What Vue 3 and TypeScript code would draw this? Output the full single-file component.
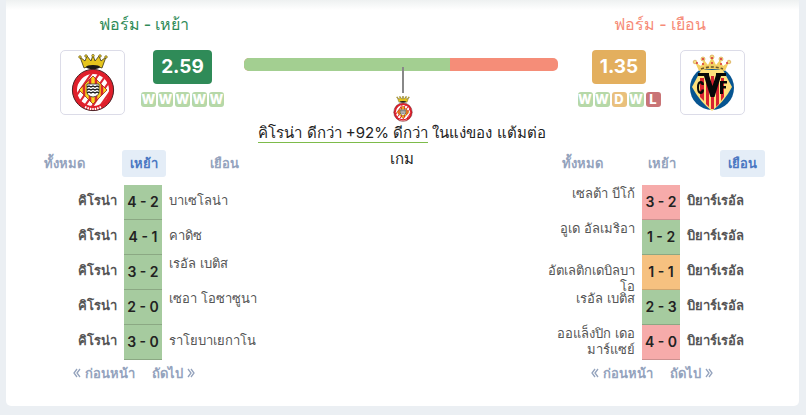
<script setup lang="ts">
type Result = 'W' | 'D' | 'L'
interface Match {
  home: string
  away: string
  score: string
  result: Result
  raised?: boolean
}
interface Side {
  key: 'home' | 'away'
  title: string
  rating: string
  form: Result[]
  active: number
  matches: Match[]
}

const tabs = ['ทั้งหมด', 'เหย้า', 'เยือน']
const girona = 'คิโรน่า'
const villarreal = 'บิยาร์เรอัล'

const homeSide: Side = {
  key: 'home',
  title: 'ฟอร์ม - เหย้า',
  rating: '2.59',
  form: ['W', 'W', 'W', 'W', 'W'],
  active: 1,
  matches: [
    { home: girona, away: 'บาเซโลน่า', score: '4 - 2', result: 'W' },
    { home: girona, away: 'คาดิซ', score: '4 - 1', result: 'W' },
    { home: girona, away: 'เรอัล เบติส', score: '3 - 2', result: 'W', raised: true },
    { home: girona, away: 'เซอา โอซาซูนา', score: '2 - 0', result: 'W', raised: true },
    { home: girona, away: 'ราโยบาเยกาโน', score: '3 - 0', result: 'W' },
  ],
}

const awaySide: Side = {
  key: 'away',
  title: 'ฟอร์ม - เยือน',
  rating: '1.35',
  form: ['W', 'W', 'D', 'W', 'L'],
  active: 2,
  matches: [
    { home: 'เซลต้า บีโก้', away: villarreal, score: '3 - 2', result: 'L', raised: true },
    { home: 'อูเด อัลเมริอา', away: villarreal, score: '1 - 2', result: 'W', raised: true },
    { home: 'อัตเลติกเดบิลบาโอ', away: villarreal, score: '1 - 1', result: 'D' },
    { home: 'เรอัล เบติส', away: villarreal, score: '2 - 3', result: 'W', raised: true },
    { home: 'ออแล็งปิก เดอ มาร์แซย์', away: villarreal, score: '4 - 0', result: 'L', raised: true },
  ],
}

const sides = [homeSide, awaySide]
const homeShare = 65.6
</script>

<template>
  <main class="card">
    <section v-for="side in sides" :key="side.key" class="side" :class="side.key">
      <h2 class="title">{{ side.title }}</h2>
      <div class="summary">
        <div class="logo">
          <svg v-if="side.key === 'home'" viewBox="0 0 44 58" width="44" height="58" role="img">
            <use href="#girona-crest" />
          </svg>
          <svg v-else viewBox="0 0 46 58" width="46" height="58" role="img">
            <circle cx="23" cy="34" r="22" fill="#075591" />
            <path d="M12 16h22l9 17Q35 48 23 57 11 48 3 33Z" fill="#ffe17c" />
            <path d="M11 24h4v23l-4-4zM17 22h3v31l-3-3zM22 22h3v33h-3zM27 22h3v28l-3 3zM32 24h3v19l-3 4z" fill="#d8232f" />
            <path d="M10 17 6 8l6 4 3-6 4 5 4-8 4 8 4-5 3 6 6-4-4 9Q23 13 10 17Z" fill="#f3cf63" />
            <g fill="#f6dc82" stroke="#cf9b3d" stroke-width=".6">
              <circle cx="6" cy="8" r="1.8" /><circle cx="14" cy="5" r="2" />
              <circle cx="23" cy="3" r="2" /><circle cx="32" cy="5" r="2" />
              <circle cx="40" cy="8" r="1.8" />
            </g>
            <g fill="#d9333b">
              <circle cx="14" cy="5" r="1.1" /><circle cx="23" cy="4" r="1.1" />
              <circle cx="32" cy="5" r="1.1" /><circle cx="14" cy="10" r="1" />
              <circle cx="23" cy="9" r="1" /><circle cx="32" cy="10" r="1" />
              <circle cx="8" cy="9" r="1" /><circle cx="38" cy="9" r="1" />
            </g>
            <path d="M12 15q11-4 22 0" fill="none" stroke="#6a5528" stroke-width="1.6" stroke-dasharray="3 2" />
            <path d="M9 19h11v2l3.500 11L27 21v-2h10v3h-5l-6.500 21h-4L15 22H9z" fill="#080808" />
            <path d="M15 31h-2.500q0-1.500-1-1.500-1.500 0-1.500 4t1.500 4q1 0 1-2H15q0 4.500-3.500 4.500T8 33.500t3.500-6.500q3.500 0 3.500 4z" fill="#080808" />
            <path d="M31 27h7v2.500h-4v2.500h3v2.500h-3V40h-3z" fill="#080808" />
          </svg>
        </div>
        <div class="form">
          <strong class="rating">{{ side.rating }}</strong>
          <div class="badges">
            <span v-for="(r, i) in side.form" :key="i" class="badge" :class="'form-' + r">{{ r }}</span>
          </div>
        </div>
      </div>

      <nav class="tabs">
        <div v-for="(tab, i) in tabs" :key="tab" class="tab-cell">
          <button type="button" class="tab" :class="{ active: side.active === i }">{{ tab }}</button>
        </div>
      </nav>

      <table class="matches">
        <tbody>
          <tr v-for="(m, i) in side.matches" :key="i">
            <td class="team first">
              <div class="name" :class="{ own: side.key === 'home', raised: side.key === 'away' && m.raised }">{{ m.home }}</div>
            </td>
            <td class="score" :class="'score-' + m.result">{{ m.score }}</td>
            <td class="team">
              <div class="name" :class="{ own: side.key === 'away', raised: side.key === 'home' && m.raised }">{{ m.away }}</div>
            </td>
          </tr>
        </tbody>
      </table>

      <div class="pager">
        <a href="#">
          <svg viewBox="0 0 8 10" width="8" height="10"><path d="M4 1 1 5l3 4M7 1 4 5l3 4" /></svg>
          ก่อนหน้า
        </a>
        <a href="#">
          ถัดไป
          <svg viewBox="0 0 8 10" width="8" height="10"><path d="m1 1 3 4-3 4M4 1l3 4-3 4" /></svg>
        </a>
      </div>
    </section>

    <section class="compare">
      <div class="bar"><div class="bar-home" :style="{ width: homeShare + '%' }"></div></div>
      <div class="marker">
        <div class="pointer"></div>
        <svg class="small-crest" viewBox="0 0 44 58" width="20" height="26">
          <defs>
            <clipPath id="ring"><circle cx="22" cy="36" r="17" /></clipPath>
            <clipPath id="diamond"><path d="M22 22 36 36 22 50 8 36z" /></clipPath>
          </defs>
          <g id="girona-crest">
            <path d="M13 14 9 3l5 4 2-5 4 5 2-6 2 6 4-5 2 5 5-4-4 11q-9-4-18 0z" fill="#e5c51d" stroke="#3a3212" stroke-width=".8" />
            <g fill="#f4d72d" stroke="#554713" stroke-width=".6">
              <circle cx="9" cy="3" r="1.3" /><circle cx="15" cy="2" r="1.3" />
              <circle cx="22" cy="1.7" r="1.3" /><circle cx="29" cy="2" r="1.3" />
              <circle cx="35" cy="3" r="1.3" />
            </g>
            <ellipse cx="22" cy="13" rx="7" ry="2" fill="#1c1a16" />
            <circle cx="22" cy="36" r="20.6" fill="#e01f2b" stroke="#4b2024" stroke-width="1" />
            <circle cx="22" cy="36" r="16" fill="#fff" />
            <g clip-path="url(#ring)">
              <path d="M-4 44 18 12M1 48 23 16M6 52 28 20M11 56 33 24M16 60 38 28M21 64 43 32M-9 40 13 8M26 68 48 36" stroke="#df2632" stroke-width="2.2" />
            </g>
            <g clip-path="url(#diamond)">
              <path d="M8 22h28v28H8z" fill="#f9d41e" />
              <path d="M13 22v28M19 22v28M25 22v28M31 22v28" stroke="#d92a2a" stroke-width="2.600" />
            </g>
            <path d="M22 22 36 36 22 50 8 36z" fill="none" stroke="#9c241d" stroke-width=".8" />
            <path d="M16 30h12v8q0 4-6 5-6-1-6-5z" fill="#fff" stroke="#333" stroke-width=".8" />
            <path d="m16 33 2-1 2 1 2-1 2 1 2-1 2 1M16 36l2-1 2 1 2-1 2 1 2-1 2 1M16 39l2-1 2 1 2-1 2 1 2-1 2 1" fill="none" stroke="#111" stroke-width="1.3" />
            <path d="M14 53q8 4 16 0" fill="none" stroke="#fff" stroke-width="2" stroke-dasharray="1.5 1" />
          </g>
        </svg>
      </div>
      <p class="verdict"><span>คิโรน่า ดีกว่า +92% ดีกว่า</span> ในแง่ของ แต้มต่อเกม</p>
    </section>
  </main>
</template>

<style>
body {
  background: #ebeff3;
}
</style>

<style scoped>
.card {
  display: grid;
  grid-template-columns: 240px minmax(0, 1fr) 240px;
  margin: 0 7px 9px 6px;
  padding: 0 17px 22px 18px;
  background: #fff linear-gradient(#eef1f1, #fff 10px) no-repeat;
  border-radius: 0 0 5px 5px;
  font-family: Inter, "DejaVu Sans", sans-serif;
  color: #222;
}
.side {
  grid-row: 1;
}
.side.home {
  grid-column: 1;
}
.side.away {
  grid-column: 3;
}
.title {
  margin: 0;
  padding-top: 12px;
  font-size: 16px;
  line-height: 24px;
  font-weight: 500;
  text-align: center;
  color: #2f8b58;
}
.away .title {
  padding-right: 4px;
  color: #f68b77;
}
.summary {
  display: flex;
  justify-content: center;
  gap: 16px;
  margin-top: 14px;
  padding-right: 4px;
}
.away .summary {
  flex-direction: row-reverse;
  gap: 19px;
  padding-right: 2px;
}
.logo {
  box-sizing: border-box;
  display: flex;
  align-items: center;
  justify-content: center;
  width: 65px;
  height: 65px;
  border: 1px solid #dcdce8;
  border-radius: 5px;
}
.form {
  display: flex;
  flex-direction: column;
  align-items: center;
  gap: 8px;
}
.rating {
  padding: 0 8px;
  border-radius: 4px;
  background: #2f8b58;
  color: #fff;
  font-size: 19px;
  line-height: 34px;
  font-weight: 700;
}
.away .rating {
  background: #e3af5e;
}
.badges {
  display: flex;
  gap: 2px;
}
.badge {
  display: flex;
  justify-content: center;
  width: 15px;
  height: 15px;
  border-radius: 3px;
  color: #fff;
  font-size: 13px;
  line-height: 15px;
  font-weight: 800;
}
.form-W {
  background: #b6d8a8;
}
.form-D {
  background: #e9c07d;
}
.form-L {
  background: #c97476;
}
.tabs {
  display: flex;
  margin-top: 35px;
}
.tab-cell {
  flex: 1;
  text-align: center;
}
.tab {
  padding: 0 8px;
  border: 0;
  border-radius: 3px;
  background: none;
  color: #94a3bd;
  font: inherit;
  font-size: 13px;
  line-height: 27px;
  font-weight: 600;
}
.tab.active {
  background: #e4edf7;
  color: #4b78c2;
}
.matches {
  width: 100%;
  margin-top: 8px;
  border-collapse: collapse;
  table-layout: fixed;
}
.matches td {
  padding: 0;
}
.team {
  vertical-align: top;
}
.name {
  box-sizing: border-box;
  height: 34px;
  padding: 7px 7px 0;
  font-size: 13px;
  line-height: 16px;
  color: #555;
}
.name.raised {
  padding-top: 0;
}
.name.own {
  font-weight: 600;
}
.first {
  width: 100px;
  text-align: right;
}
.first .name {
  padding-left: 0;
}
.matches .score {
  width: 38px;
  height: 34px;
  border-bottom: 1px solid #8ba883;
  font-size: 14px;
  line-height: 34px;
  font-weight: 600;
  text-align: center;
  white-space: nowrap;
}
.matches .score-W {
  background: #a6cb9f;
}
.matches .score-D {
  background: #f6c180;
  border-color: #cfa56f;
}
.matches .score-L {
  background: #f6abaa;
  border-color: #cc9190;
}
.pager {
  display: flex;
  justify-content: center;
  gap: 17px;
  padding: 2px 20px 0 0;
}
.pager a {
  display: flex;
  align-items: center;
  gap: 4px;
  color: #94a3bd;
  font-size: 13px;
  line-height: 22px;
  font-weight: 600;
  text-decoration: none;
}
.pager path {
  fill: none;
  stroke: #94a3bd;
  stroke-width: 1.3;
}
.compare {
  grid-column: 2;
  grid-row: 1;
  display: flex;
  flex-direction: column;
  align-items: center;
  margin: 0 -16px 0 -20px;
  padding-top: 58px;
}
.bar {
  width: 100%;
  height: 13px;
  border-radius: 5px;
  overflow: hidden;
  background: #f58d78;
}
.bar-home {
  height: 100%;
  background: #a3cf91;
}
.marker {
  display: flex;
  flex-direction: column;
  align-items: center;
  gap: 3px;
  margin-top: -4px;
  padding-left: 4px;
}
.pointer {
  width: 2px;
  height: 26px;
  background: #888;
}
.verdict {
  margin: -2px 0 0;
  padding: 0 2px 0 4px;
  font-size: 15px;
  line-height: 26px;
  text-align: center;
}
.verdict span {
  border-bottom: 1px solid #7dbb4a;
}
</style>
